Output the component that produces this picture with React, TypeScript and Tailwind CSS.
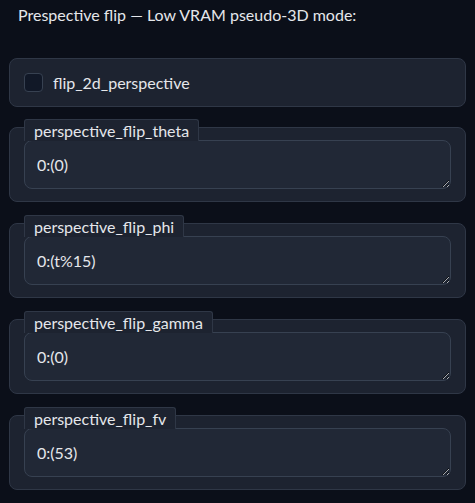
import React from "react";

const fields = [
  { label: "perspective_flip_theta", value: "0:(0)" },
  { label: "perspective_flip_phi", value: "0:(t%15)" },
  { label: "perspective_flip_gamma", value: "0:(0)" },
  { label: "perspective_flip_fv", value: "0:(53)" },
];

function Field({ label, value }: { label: string; value: string }) {
  return (
    <div className="relative mt-[9px] rounded-lg border border-[#2f3746] bg-[#1d2330] px-[14px] pt-[12px] pb-[12px]">
      <span className="absolute -top-[9px] left-[14px] h-[22px] rounded-t-[3px] border border-b-0 border-[#2f3746] bg-[#1d2330] px-[9px] text-[16px] leading-[21px] text-[#e5e7eb]">
        {label}
      </span>
      <textarea
        defaultValue={value}
        rows={1}
        className="block h-[49px] w-full resize-y rounded-lg border border-[#374151] bg-[#212836] px-3 pt-[12px] text-[16px] leading-[24px] text-[#e5e7eb] outline-none [color-scheme:dark]"
      />
    </div>
  );
}

export default function App() {
  return (
    <div
      className="min-h-[503px] w-[475px] bg-[#0b0f19] px-[9px] pt-[3px]"
      style={{ fontFamily: '"Source Sans Pro", Lato, "Noto Sans", sans-serif' }}
    >
      <p className="pl-[9px] text-[16px] leading-[24px] text-[#e5e7eb]">
        Prespective flip — Low VRAM pseudo-3D mode:
      </p>
      <div className="mt-[31px] flex h-[49px] items-center gap-[10px] rounded-lg border border-[#2f3746] bg-[#1d2330] px-[14px]">
        <span className="block h-[19px] w-[19px] rounded-[4px] border border-[#374151] bg-[#111827]" />
        <span className="text-[16px] text-[#e5e7eb]">flip_2d_perspective</span>
      </div>
      <div className="mt-[11px] flex flex-col gap-[12px]">
        {fields.map((f) => (
          <Field key={f.label} {...f} />
        ))}
      </div>
    </div>
  );
}
